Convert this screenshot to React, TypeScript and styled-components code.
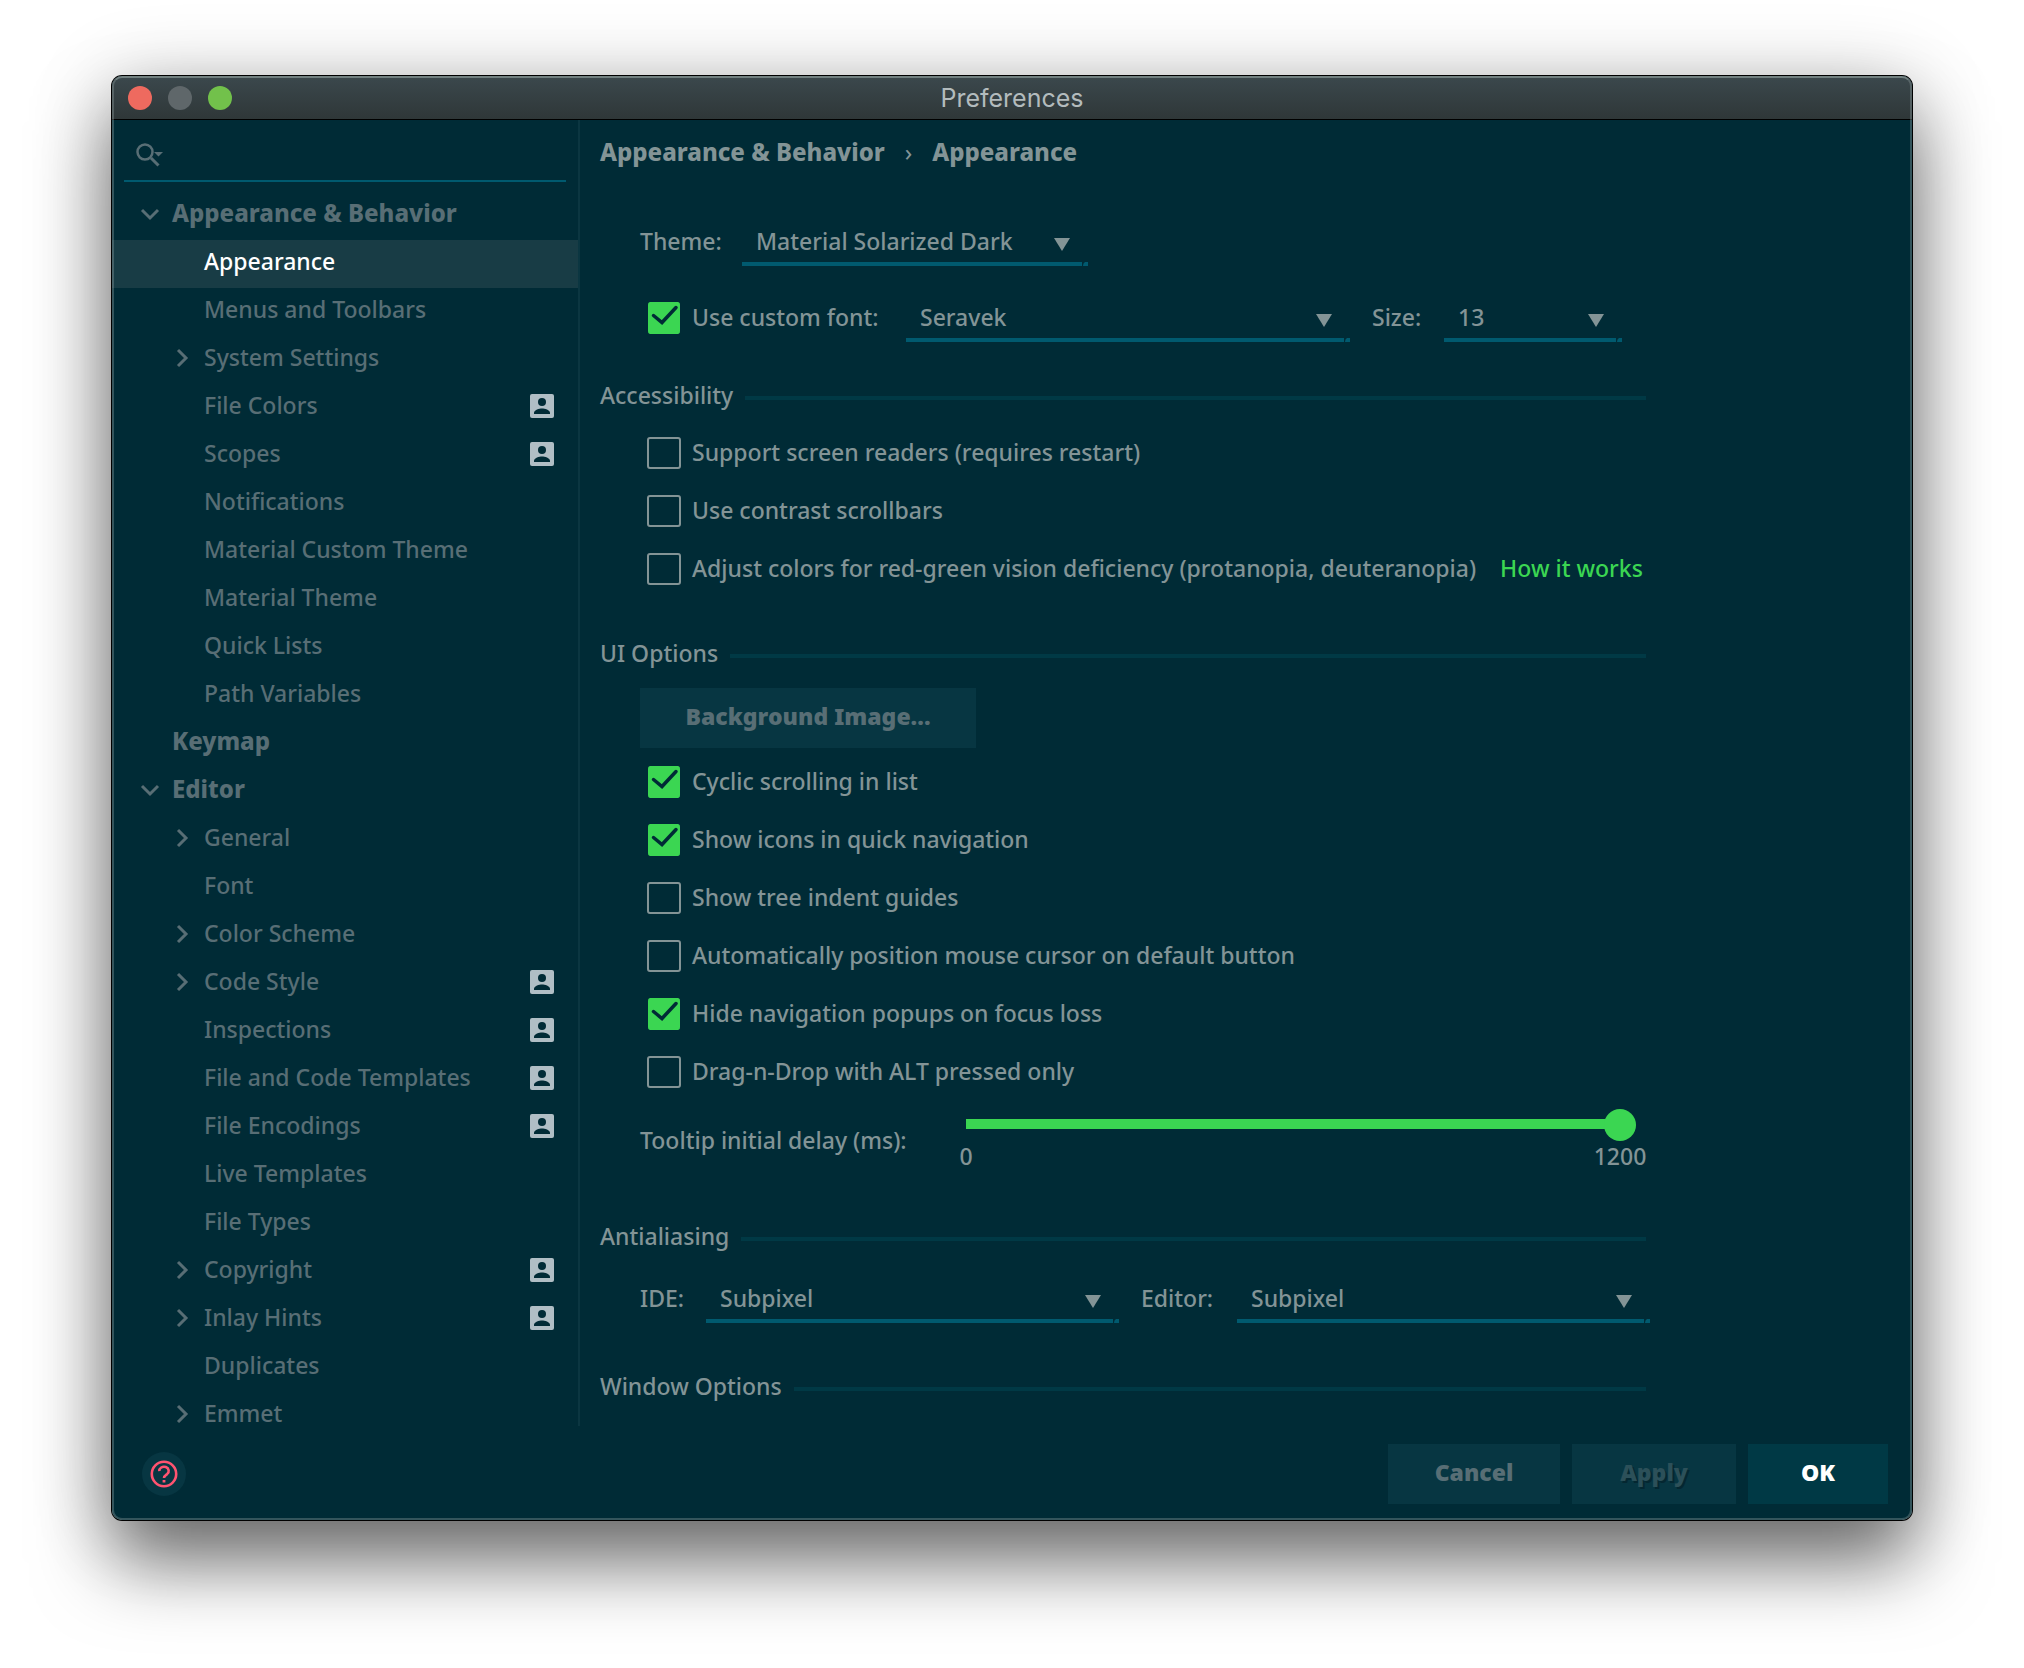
import React, { useId, useState } from "react";
import styled, { createGlobalStyle, css } from "styled-components";

const c = {
  bg: "#002b36",
  text: "#839496",
  muted: "#586e75",
  accent: "#3bd652",
  underline: "#005a6f",
  line: "#003945",
  button: "#073642",
  selected: "#183c45",
};

const GlobalStyle = createGlobalStyle`
  * { box-sizing: border-box; }
  body { margin: 0; background: #fff; }
  body, button, select, input {
    font-family: "Noto Sans", "Open Sans", sans-serif;
    font-size: 23px;
    font-weight: 500;
  }
  button { border: 0; cursor: pointer; }
  h1, h2, p, ul { margin: 0; padding: 0; font-weight: inherit; font-size: inherit; }
`;

const Page = styled.div`
  height: 100vh;
  min-height: 800px;
  padding: 76px 112px 148px;
`;

const Window = styled.main`
  position: relative;
  display: flex;
  flex-direction: column;
  height: 100%;
  border-radius: 10px;
  overflow: hidden;
  background: ${c.bg};
  color: ${c.text};
`;

const Frame = styled.div`
  height: 100%;
  border-radius: 10px;
  box-shadow: 0 0 0 1px #000, 0 44px 76px rgba(0, 0, 0, 0.5), 0 8px 80px rgba(0, 0, 0, 0.24);
`;

const Rim = styled.div`
  position: absolute;
  inset: 0;
  border: 2px solid rgba(150, 165, 165, 0.35);
  border-top-color: rgba(170, 185, 180, 0.5);
  border-radius: 10px;
  pointer-events: none;
`;

const TitleBar = styled.header`
  display: grid;
  grid-template-columns: 1fr auto 1fr;
  align-items: center;
  flex: none;
  height: 44px;
  padding: 0 16px;
  border-bottom: 1px solid #000;
  background: linear-gradient(#3b484d, #2f3738);
`;

const Lights = styled.div`
  display: flex;
  gap: 16px;
`;

const Light = styled.button<{ $color: string }>`
  width: 24px;
  height: 24px;
  padding: 0;
  border-radius: 50%;
  background: ${(p) => p.$color};
`;

const WindowTitle = styled.h1`
  font-family: Inter, "Liberation Sans", sans-serif;
  font-size: 25px;
  font-weight: 400;
  line-height: 32px;
  color: #b3bbbd;
`;

const Body = styled.div`
  display: flex;
  flex: 1;
  min-height: 0;
`;

const Sidebar = styled.nav`
  flex: none;
  width: 466px;
  overflow: hidden;
`;

const SearchBox = styled.label`
  display: flex;
  align-items: center;
  gap: 8px;
  height: 62px;
  margin: 0 12px 10px;
  padding: 10px 12px 0;
  border-bottom: 2px solid ${c.underline};
  svg { flex: none; }
`;

const SearchInput = styled.input`
  flex: 1;
  min-width: 0;
  border: 0;
  outline: 0;
  background: none;
  color: ${c.text};
`;

const Tree = styled.ul`
  list-style: none;
`;

const TreeRow = styled.button<{ $level: number; $selected?: boolean }>`
  display: flex;
  align-items: center;
  gap: 12px;
  width: 100%;
  height: 48px;
  padding: 0 24px 4px ${(p) => 28 + p.$level * 32}px;
  background: ${(p) => (p.$selected ? c.selected : "none")};
  color: ${(p) => (p.$selected ? "#fff" : c.muted)};
  font-size: ${(p) => (p.$level === 0 ? 24 : 23)}px;
  font-weight: ${(p) => (p.$level === 0 ? 800 : 500)};
  text-align: left;
`;

const Toggle = styled.span`
  display: grid;
  place-items: center;
  width: 20px;
  height: 20px;
`;

const RowLabel = styled.span`
  flex: 1;
  padding-bottom: 2px;
  line-height: 28px;
`;

const Panel = styled.section`
  flex: 1;
  min-width: 0;
  margin-bottom: 4px;
  padding: 0 20px;
  border-left: 2px solid #0b3641;
  overflow: hidden;
`;

const Column = styled.div`
  max-width: 1054px;
`;

const Breadcrumb = styled.div`
  display: flex;
  align-items: center;
  gap: 20px;
  height: 62px;
  margin-bottom: 36px;
  font-size: 24px;
  font-weight: 800;
`;

const Divider = styled.span`
  font-weight: 400;
`;

const Line = styled.div<{ $top?: number; $right?: number }>`
  display: flex;
  align-items: center;
  margin: ${(p) => p.$top ?? 0}px ${(p) => p.$right ?? 0}px 0 40px;
`;

const FieldLabel = styled.label<{ $width: number }>`
  flex: none;
  width: ${(p) => p.$width}px;
  padding-bottom: 2px;
`;

const SelectBox = styled.div<{ $width?: number; $gap?: number }>`
  position: relative;
  margin-right: ${(p) => p.$gap ?? 0}px;
  ${(p) => (p.$width ? css`flex: none; width: ${p.$width}px;` : css`flex: 1;`)}
`;

const NativeSelect = styled.select`
  display: block;
  width: 100%;
  height: 48px;
  padding: 2px 40px 0 14px;
  appearance: none;
  border: 0;
  border-bottom: 4px solid ${c.underline};
  border-radius: 0;
  outline: 0;
  background: none;
  color: ${c.text};
`;

const SelectArrow = styled.svg`
  position: absolute;
  right: 0;
  bottom: 0;
  pointer-events: none;
`;

const SectionTitle = styled.h2<{ $top: number; $bottom: number }>`
  display: flex;
  align-items: center;
  gap: 12px;
  height: 32px;
  margin: ${(p) => p.$top}px 8px ${(p) => p.$bottom}px 0;
  padding-bottom: 2px;
  &::after {
    content: "";
    flex: 1;
    height: 4px;
    margin-top: 6px;
    background: ${c.line};
  }
`;

const CheckRow = styled.div`
  display: flex;
  align-items: center;
  height: 58px;
  margin-left: 47px;
`;

const CheckLabel = styled.label`
  display: flex;
  align-items: center;
  gap: 11px;
`;

const CheckText = styled.span`
  padding-bottom: 2px;
`;

const Tick = styled.span`
  display: grid;
  > * { grid-area: 1 / 1; }
  svg { pointer-events: none; }
`;

const TickInput = styled.input`
  width: 34px;
  height: 32px;
  margin: 0;
  appearance: none;
  border: 2px solid ${c.text};
  border-radius: 3px;
  &:checked {
    border: 0 solid transparent;
    border-width: 0 1px;
    background: ${c.accent};
    background-clip: padding-box;
  }
  &:not(:checked) + svg { display: none; }
`;

const Link = styled.a`
  margin-left: 24px;
  padding-bottom: 2px;
  color: ${c.accent};
  text-decoration: none;
`;

const Button = styled.button<{ $primary?: boolean; $width: number }>`
  min-width: ${(p) => p.$width}px;
  height: 60px;
  padding: 0 0 4px;
  background: ${(p) => (p.$primary ? c.line : c.button)};
  color: ${(p) => (p.$primary ? "#fff" : c.muted)};
  font-weight: 900;
  &:disabled {
    color: #2c5059;
    text-shadow: 2px 2px 0 #042731;
  }
`;

const ButtonLine = styled.div`
  margin: 0 0 5px 40px;
`;

const SliderRow = styled.div`
  display: grid;
  grid-template-columns: 310px 1fr;
  align-items: center;
  margin: 8px 18px 0 40px;
`;

const SliderLabel = styled.label`
  padding-bottom: 2px;
`;

const Range = styled.input`
  display: block;
  width: 100%;
  height: 32px;
  margin: 0;
  appearance: none;
  background: linear-gradient(${c.accent}, ${c.accent}) 16px 10px / calc(100% - 32px) 10px no-repeat;
  &::-webkit-slider-thumb {
    appearance: none;
    width: 32px;
    height: 32px;
    border-radius: 50%;
    background: ${c.accent};
  }
`;

const Scale = styled.div`
  display: flex;
  justify-content: space-between;
  padding-bottom: 2px;
  line-height: 30px;
`;

const ScaleMark = styled.span`
  display: flex;
  justify-content: center;
  width: 32px;
`;

const Footer = styled.footer`
  display: flex;
  align-items: center;
  flex: none;
  gap: 12px;
  padding: 14px 24px 16px 30px;
`;

const HelpButton = styled.button`
  display: grid;
  place-items: center;
  width: 44px;
  height: 44px;
  margin-right: auto;
  padding: 0;
  border-radius: 50%;
  background: ${c.button};
`;

const FontCheck = styled.div`
  width: 259px;
  margin-left: 7px;
`;

function Chevron({ open }: { open: boolean }) {
  return (
    <svg width="20" height="20" viewBox="0 0 20 20" fill="none" stroke={c.muted} strokeWidth="3">
      <path d={open ? "M2 6l8 8 8-8" : "M6 2l8 8-8 8"} />
    </svg>
  );
}

function ProjectBadge() {
  return (
    <svg width="24" height="24" viewBox="0 0 24 24">
      <rect width="24" height="24" rx="2" fill="#b0bec5" />
      <circle cx="12" cy="8" r="4" fill={c.bg} />
      <path d="M4 20v-1.400c0-2.700 5.300-4.200 8-4.200s8 1.500 8 4.200V20z" fill={c.bg} />
    </svg>
  );
}

function Select({ id, value, width, gap }: { id: string; value: string; width?: number; gap?: number }) {
  return (
    <SelectBox $width={width} $gap={gap}>
      <NativeSelect id={id} defaultValue={value}>
        <option>{value}</option>
      </NativeSelect>
      <SelectArrow width="40" height="32" viewBox="0 0 40 32">
        <path d="M6 4h16l-8 13z" fill={c.text} />
        <path d="M34 28h3q-2 1-2 4h-1z" fill={c.bg} />
      </SelectArrow>
    </SelectBox>
  );
}

function Check({ label, checked = false }: { label: string; checked?: boolean }) {
  const [on, setOn] = useState(checked);
  const id = useId();
  return (
    <CheckLabel htmlFor={id}>
      <Tick>
        <TickInput id={id} type="checkbox" checked={on} onChange={() => setOn(!on)} />
        <svg width="34" height="32" viewBox="0 0 34 32" fill="none" stroke={c.bg} strokeWidth="3.500" strokeLinecap="round">
          <path d="M6.500 13.500l8.500 7L29 5.500" />
        </svg>
      </Tick>
      <CheckText>{label}</CheckText>
    </CheckLabel>
  );
}

type Node = { label: string; level?: number; open?: boolean; badge?: boolean; selected?: boolean };

const nodes: Node[] = [
  { label: "Appearance & Behavior", level: 0, open: true },
  { label: "Appearance", selected: true },
  { label: "Menus and Toolbars" },
  { label: "System Settings", open: false },
  { label: "File Colors", badge: true },
  { label: "Scopes", badge: true },
  { label: "Notifications" },
  { label: "Material Custom Theme" },
  { label: "Material Theme" },
  { label: "Quick Lists" },
  { label: "Path Variables" },
  { label: "Keymap", level: 0 },
  { label: "Editor", level: 0, open: true },
  { label: "General", open: false },
  { label: "Font" },
  { label: "Color Scheme", open: false },
  { label: "Code Style", open: false, badge: true },
  { label: "Inspections", badge: true },
  { label: "File and Code Templates", badge: true },
  { label: "File Encodings", badge: true },
  { label: "Live Templates" },
  { label: "File Types" },
  { label: "Copyright", open: false, badge: true },
  { label: "Inlay Hints", open: false, badge: true },
  { label: "Duplicates" },
  { label: "Emmet", open: false },
];

const uiOptions = [
  { label: "Cyclic scrolling in list", checked: true },
  { label: "Show icons in quick navigation", checked: true },
  { label: "Show tree indent guides" },
  { label: "Automatically position mouse cursor on default button" },
  { label: "Hide navigation popups on focus loss", checked: true },
  { label: "Drag-n-Drop with ALT pressed only" },
];

export default function App() {
  const [delay, setDelay] = useState(1200);
  return (
    <Page>
      <GlobalStyle />
      <Frame>
        <Window>
          <TitleBar>
            <Lights>
              <Light $color="#ee6a5f" aria-label="Close" />
              <Light $color="#5f676a" aria-label="Minimize" />
              <Light $color="#72c14b" aria-label="Zoom" />
            </Lights>
            <WindowTitle>Preferences</WindowTitle>
          </TitleBar>
          <Body>
            <Sidebar>
              <SearchBox>
                <svg width="28" height="24" viewBox="0 0 28 24" fill="none" stroke={c.muted} strokeWidth="2.500">
                  <circle cx="9" cy="9" r="7.500" />
                  <path d="M15 15l7.500 7.500" strokeWidth="3" />
                  <path d="M18 9h9l-4.500 4.500z" fill={c.muted} stroke="none" />
                </svg>
                <SearchInput type="text" aria-label="Search settings" />
              </SearchBox>
              <Tree>
                {nodes.map((n) => (
                  <li key={n.label}>
                    <TreeRow $level={n.level ?? 1} $selected={n.selected}>
                      <Toggle>{n.open !== undefined && <Chevron open={n.open} />}</Toggle>
                      <RowLabel>{n.label}</RowLabel>
                      {n.badge && <ProjectBadge />}
                    </TreeRow>
                  </li>
                ))}
              </Tree>
            </Sidebar>
            <Panel>
              <Column>
                <Breadcrumb>
                  <span>Appearance &amp; Behavior</span>
                  <Divider>›</Divider>
                  <span>Appearance</span>
                </Breadcrumb>
                <Line>
                  <FieldLabel htmlFor="theme" $width={102}>Theme:</FieldLabel>
                  <Select id="theme" value="Material Solarized Dark" width={346} />
                </Line>
                <Line $top={28}>
                  <FontCheck>
                    <Check label="Use custom font:" checked />
                  </FontCheck>
                  <Select id="font" value="Seravek" width={444} gap={22} />
                  <FieldLabel htmlFor="size" $width={72}>Size:</FieldLabel>
                  <Select id="size" value="13" width={178} />
                </Line>

                <SectionTitle $top={38} $bottom={12}>Accessibility</SectionTitle>
                <CheckRow><Check label="Support screen readers (requires restart)" /></CheckRow>
                <CheckRow><Check label="Use contrast scrollbars" /></CheckRow>
                <CheckRow>
                  <Check label="Adjust colors for red-green vision deficiency (protanopia, deuteranopia)" />
                  <Link href="#how-it-works">How it works</Link>
                </CheckRow>

                <SectionTitle $top={40} $bottom={18}>UI Options</SectionTitle>
                <ButtonLine><Button $width={336}>Background Image...</Button></ButtonLine>
                {uiOptions.map((o) => (
                  <CheckRow key={o.label}><Check {...o} /></CheckRow>
                ))}
                <SliderRow>
                  <SliderLabel htmlFor="delay">Tooltip initial delay (ms):</SliderLabel>
                  <div>
                    <Range id="delay" type="range" min={0} max={1200} value={delay} onChange={(e) => setDelay(+e.target.value)} />
                    <Scale>
                      <ScaleMark>0</ScaleMark>
                      <ScaleMark>1200</ScaleMark>
                    </Scale>
                  </div>
                </SliderRow>

                <SectionTitle $top={48} $bottom={22}>Antialiasing</SectionTitle>
                <Line $right={4}>
                  <FieldLabel htmlFor="ide" $width={66}>IDE:</FieldLabel>
                  <Select id="ide" value="Subpixel" gap={22} />
                  <FieldLabel htmlFor="editor" $width={96}>Editor:</FieldLabel>
                  <Select id="editor" value="Subpixel" />
                </Line>

                <SectionTitle $top={48} $bottom={22}>Window Options</SectionTitle>
              </Column>
            </Panel>
          </Body>
          <Footer>
            <HelpButton aria-label="Help">
              <svg width="28" height="28" viewBox="0 0 28 28" fill="none" stroke="#ff5370" strokeWidth="2.600">
                <circle cx="14" cy="14" r="12.200" />
                <path d="M9.300 11.200a4.700 4.200 0 1 1 7.800 2.900c-1.800 1.300-3.100 1.900-3.100 4" />
                <path d="M12.600 21.200h2.800" />
              </svg>
            </HelpButton>
            <Button $width={172}>Cancel</Button>
            <Button $width={164} disabled>Apply</Button>
            <Button $width={140} $primary>OK</Button>
          </Footer>
          <Rim />
        </Window>
      </Frame>
    </Page>
  );
}
